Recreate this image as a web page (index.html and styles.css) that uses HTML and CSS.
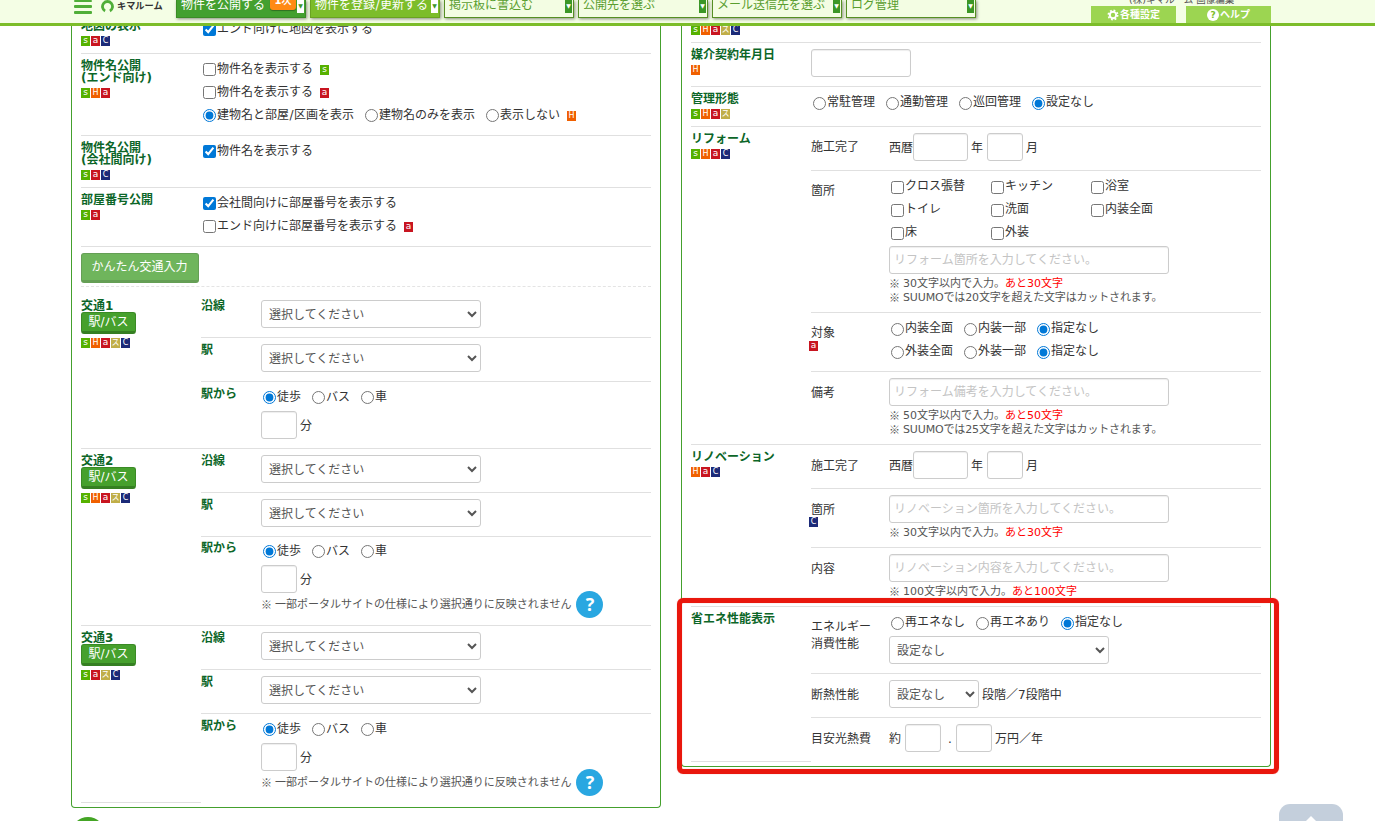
FILE: index.html
```html
<!DOCTYPE html>
<html lang="ja">
<head>
<meta charset="utf-8">
<title>物件登録</title>
<link rel="stylesheet" href="styles.css">
</head>
<body>
<header class="header">
  <div class="header-inner">
    <div class="brand">
      <span class="burger"><i></i><i></i><i></i></span>
      <svg class="brand-mark" width="13" height="13" viewBox="0 0 13 13"><path d="M4.1 10.9A5 5 0 1 1 8.9 10.9" fill="none" stroke="#4fae38" stroke-width="2.8"/></svg>
      <span class="brand-name">キマルーム</span>
    </div>
    <nav class="nav">
      <a class="nav-item nav-dark">物件を公開する<b class="nav-badge">1次</b><span class="nav-caret">▼</span></a>
      <a class="nav-item nav-lime">物件を登録<span class="slash">/</span>更新する<span class="nav-caret">▼</span></a>
      <a class="nav-item">掲示板に書込む<span class="nav-caret">▼</span></a>
      <a class="nav-item">公開先を選ぶ<span class="nav-caret">▼</span></a>
      <a class="nav-item">メール送信先を選ぶ<span class="nav-caret">▼</span></a>
      <a class="nav-item">ログ管理<span class="nav-caret">▼</span></a>
    </nav>
    <div class="account">
      <div class="account-name">(株)キマルーム 画像編集</div>
      <div class="tabs">
        <a class="tab"><svg width="12" height="12" viewBox="0 0 12 12"><circle cx="6" cy="6" r="3.2" fill="none" stroke="#fff" stroke-width="2"/><circle cx="6" cy="6" r="4.7" fill="none" stroke="#fff" stroke-width="1.6" stroke-dasharray="1.85 1.84"/></svg>各種設定</a>
        <a class="tab"><span class="tab-q">?</span>ヘルプ</a>
      </div>
    </div>
  </div>
</header>

<main class="columns">
  <section class="panel panel-left">
    <div class="row h40">
      <div class="head">地図の表示<div class="tags"><i class="s">s</i><i class="a">a</i><i class="c">C</i></div></div>
      <div class="body"><div class="line"><label><input type="checkbox" checked>エンド向けに地図を表示する</label></div></div>
    </div>
    <div class="row h82">
      <div class="head">物件名公開<br>(エンド向け)<div class="tags"><i class="s">s</i><i class="h">H</i><i class="a">a</i></div></div>
      <div class="body">
        <div class="line"><label><input type="checkbox">物件名を表示する</label><div class="tags inline"><i class="s">s</i></div></div>
        <div class="line"><label><input type="checkbox">物件名を表示する</label><div class="tags inline"><i class="a">a</i></div></div>
        <div class="line"><label><input type="radio" name="r1" checked>建物名と部屋<span class="slash">/</span>区画を表示</label><label><input type="radio" name="r1">建物名のみを表示</label><label><input type="radio" name="r1">表示しない</label><div class="tags inline"><i class="h">H</i></div></div>
      </div>
    </div>
    <div class="row h52">
      <div class="head">物件名公開<br>(会社間向け)<div class="tags"><i class="s">s</i><i class="a">a</i><i class="c">C</i></div></div>
      <div class="body"><div class="line"><label><input type="checkbox" checked>物件名を表示する</label></div></div>
    </div>
    <div class="row h59">
      <div class="head">部屋番号公開<div class="tags"><i class="s">s</i><i class="a">a</i></div></div>
      <div class="body">
        <div class="line"><label><input type="checkbox" checked>会社間向けに部屋番号を表示する</label></div>
        <div class="line"><label><input type="checkbox">エンド向けに部屋番号を表示する</label><div class="tags inline"><i class="a">a</i></div></div>
      </div>
    </div>
    <div class="easy-row"><button class="easy">かんたん交通入力</button></div>

    <div class="group">
      <div class="head">交通1<button class="station">駅/バス</button><div class="tags"><i class="s">s</i><i class="h">H</i><i class="a">a</i><i class="z">ス</i><i class="c">C</i></div></div>
      <div class="subs">
        <div class="sub h44"><b>沿線</b><div class="field"><select class="w220"><option>選択してください</option></select></div></div>
        <div class="sub h44"><b>駅</b><div class="field"><select class="w220"><option>選択してください</option></select></div></div>
        <div class="sub h66 last"><b>駅から</b><div class="access"><div class="line"><label><input type="radio" name="a1" checked>徒歩</label><label><input type="radio" name="a1">バス</label><label><input type="radio" name="a1">車</label></div><div class="minutes"><input type="text" class="w36"><span>分</span></div></div></div>
      </div>
    </div>
    <div class="group">
      <div class="head">交通2<button class="station">駅/バス</button><div class="tags"><i class="s">s</i><i class="h">H</i><i class="a">a</i><i class="z">ス</i><i class="c">C</i></div></div>
      <div class="subs">
        <div class="sub h44"><b>沿線</b><div class="field"><select class="w220"><option>選択してください</option></select></div></div>
        <div class="sub h44"><b>駅</b><div class="field"><select class="w220"><option>選択してください</option></select></div></div>
        <div class="sub h88 last"><b>駅から</b><div class="access"><div class="line"><label><input type="radio" name="a2" checked>徒歩</label><label><input type="radio" name="a2">バス</label><label><input type="radio" name="a2">車</label></div><div class="minutes"><input type="text" class="w36"><span>分</span><div class="notice"><i class="km">※</i>一部ポータルサイトの仕様により選択通りに反映されません<span class="help">?</span></div></div></div></div>
      </div>
    </div>
    <div class="group final">
      <div class="head">交通3<button class="station">駅/バス</button><div class="tags"><i class="s">s</i><i class="a">a</i><i class="z">ス</i><i class="c">C</i></div></div>
      <div class="subs">
        <div class="sub h44"><b>沿線</b><div class="field"><select class="w220"><option>選択してください</option></select></div></div>
        <div class="sub h44"><b>駅</b><div class="field"><select class="w220"><option>選択してください</option></select></div></div>
        <div class="sub h89 last"><b>駅から</b><div class="access"><div class="line"><label><input type="radio" name="a3" checked>徒歩</label><label><input type="radio" name="a3">バス</label><label><input type="radio" name="a3">車</label></div><div class="minutes"><input type="text" class="w36"><span>分</span><div class="notice"><i class="km">※</i>一部ポータルサイトの仕様により選択通りに反映されません<span class="help">?</span></div></div></div></div>
      </div>
    </div>
  </section>

  <section class="panel panel-right">
    <div class="row h18"><div class="head flat"><div class="tags"><i class="s">s</i><i class="h">H</i><i class="a">a</i><i class="z">ス</i><i class="c">C</i></div></div></div>
    <div class="row h44">
      <div class="head">媒介契約年月日<div class="tags"><i class="h">H</i></div></div>
      <div class="field"><input type="text" class="w100"></div>
    </div>
    <div class="row h40">
      <div class="head">管理形態<div class="tags"><i class="s">s</i><i class="h">H</i><i class="a">a</i><i class="z">ス</i></div></div>
      <div class="body raised"><div class="line"><label><input type="radio" name="m"><span>常駐管理</span></label><label><input type="radio" name="m"><span>通勤管理</span></label><label><input type="radio" name="m"><span>巡回管理</span></label><label><input type="radio" name="m" checked><span>設定なし</span></label></div></div>
    </div>
    <div class="group">
      <div class="head">リフォーム<div class="tags"><i class="s">s</i><i class="h">H</i><i class="a">a</i><i class="c">C</i></div></div>
      <div class="subs">
        <div class="sub h44"><span class="cap">施工完了</span><div class="field inline-field"><span>西暦</span><input type="text" class="w55"><span class="yr">年</span><input type="text" class="w36"><span class="mo">月</span></div></div>
        <div class="sub h142"><span class="cap">箇所</span><div class="raised">
          <div class="checks">
            <label><input type="checkbox"><span>クロス張替</span></label><label><input type="checkbox"><span>キッチン</span></label><label><input type="checkbox"><span>浴室</span></label>
            <label><input type="checkbox"><span>トイレ</span></label><label><input type="checkbox"><span>洗面</span></label><label><input type="checkbox"><span>内装全面</span></label>
            <label><input type="checkbox"><span>床</span></label><label><input type="checkbox"><span>外装</span></label>
          </div>
          <input type="text" class="w280 gap1" placeholder="リフォーム箇所を入力してください。">
          <div class="notes"><p><i class="km">※</i>30文字以内で入力。<em>あと30文字</em></p><p class="snug"><i class="km">※</i>SUUMOでは20文字を超えた文字はカットされます。</p></div>
        </div></div>
        <div class="sub h59"><span class="cap">対象<span class="tags cap-tag"><i class="a">a</i></span></span><div class="raised">
          <div class="line"><label><input type="radio" name="t1"><span>内装全面</span></label><label><input type="radio" name="t1"><span>内装一部</span></label><label><input type="radio" name="t1" checked><span>指定なし</span></label></div>
          <div class="line"><label><input type="radio" name="t2"><span>外装全面</span></label><label><input type="radio" name="t2"><span>外装一部</span></label><label><input type="radio" name="t2" checked><span>指定なし</span></label></div>
        </div></div>
        <div class="sub h72 last"><span class="cap low">備考</span><div class="field"><input type="text" class="w280" placeholder="リフォーム備考を入力してください。">
          <div class="notes"><p><i class="km">※</i>50文字以内で入力。<em>あと50文字</em></p><p class="snug"><i class="km">※</i>SUUMOでは25文字を超えた文字はカットされます。</p></div></div></div>
      </div>
    </div>
    <div class="group">
      <div class="head">リノベーション<div class="tags"><i class="h">H</i><i class="a">a</i><i class="c">C</i></div></div>
      <div class="subs">
        <div class="sub h44"><span class="cap low">施工完了</span><div class="field inline-field"><span>西暦</span><input type="text" class="w55"><span class="yr">年</span><input type="text" class="w36"><span class="mo">月</span></div></div>
        <div class="sub h59"><span class="cap low">箇所<span class="tags cap-tag"><i class="c">C</i></span></span><div class="field"><input type="text" class="w280" placeholder="リノベーション箇所を入力してください。">
          <div class="notes"><p><i class="km">※</i>30文字以内で入力。<em>あと30文字</em></p></div></div></div>
        <div class="sub h58 last"><span class="cap low">内容</span><div class="field"><input type="text" class="w280" placeholder="リノベーション内容を入力してください。">
          <div class="notes"><p><i class="km">※</i>100文字以内で入力。<em>あと100文字</em></p></div></div></div>
      </div>
    </div>
    <div class="group final">
      <div class="head">省エネ性能表示</div>
      <div class="subs">
        <div class="sub h67"><span class="cap">エネルギー<br>消費性能</span><div class="raised">
          <div class="line"><label><input type="radio" name="e"><span>再エネなし</span></label><label><input type="radio" name="e"><span>再エネあり</span></label><label><input type="radio" name="e" checked><span>指定なし</span></label></div>
          <select class="w220 gap1"><option>設定なし</option></select>
        </div></div>
        <div class="sub h44"><span class="cap low">断熱性能</span><div class="field inline-field"><select class="w90"><option>設定なし</option></select><span class="after">段階／7段階中</span></div></div>
        <div class="sub h44 last"><span class="cap low">目安光熱費</span><div class="field inline-field"><span class="approx">約</span><input type="text" class="w36"><span class="dot">.</span><input type="text" class="w36"><span class="after">万円／年</span></div></div>
      </div>
    </div>
  </section>
</main>
<div class="highlight"></div>
<svg class="round-button" width="34" height="4" viewBox="0 0 34 4"><circle cx="17" cy="17" r="17" fill="#44a525"/></svg>
<a class="to-top"><svg width="64" height="17" viewBox="0 0 64 17"><path d="M18 26L32 12L46 26Z" fill="#fff"/></svg></a>
</body>
</html>
```

FILE: styles.css
```css
* { box-sizing: border-box; }
body {
  margin: 0; height: 821px; overflow: hidden; position: relative;
  background: #fff; color: #333;
  font: 12px/23px "DejaVu Sans", "Noto Sans CJK JP", sans-serif;
}

/* header */
.header {
  position: fixed; top: 0; left: 0; right: 0; z-index: 5; height: 26px;
  background: #f4fee5; border-bottom: 3px solid #7cbd2a; overflow: hidden;
}
.header-inner { width: 1200px; margin-left: 71px; height: 23px; display: flex; }
.brand { width: 105px; display: flex; align-items: flex-start; padding: 0 0 0 3px; }
.burger { display: flex; flex-direction: column; gap: 3px; width: 18px; }
.burger i { height: 3px; background: #4fae38; border-radius: 1px; }
.burger i:first-child { height: 2px; }
.brand-mark { margin: 0 3px 0 9px; }
.brand-name { font-size: 9.2px; font-weight: bold; line-height: 12px; color: #333; }
.nav { display: flex; gap: 4px; height: 18px; }
.nav-item {
  position: relative; width: 130px; height: 18px; padding-left: 4px;
  border: 1px solid #568f23; border-top: 0; line-height: 11px;
  color: #5a9e2f; background: #f3fde3; box-shadow: 1px 1px 3px rgba(0,0,0,.45); white-space: nowrap;
}
.nav-dark { background: #43a02f; color: #fff; border-color: #3b8c26; }
.nav-lime { background: #7cbd2a; color: #fff; border-color: #6aa321; }
.nav-caret {
  position: absolute; right: 1px; top: 0; width: 7px; height: 13px; background: #3b9626; color: #fff;
  font-size: 6px; line-height: 12px; text-align: center;
}
.nav-dark .nav-caret, .nav-lime .nav-caret { background: #fff; color: #3b9626; }
.nav-badge {
  position: absolute; left: 93px; top: -6px; width: 26px; height: 16px; border-radius: 3px; background: #ff8a15;
  font-size: 10px; line-height: 14px; text-align: center; box-shadow: 0 1px 1px rgba(0,0,0,.3);
}
.account { margin-left: auto; width: 180px; height: 23px; }
.account-name { height: 6px; margin-left: 38px; font-size: 9.5px; line-height: 0; color: #555; white-space: nowrap; }
.tabs { display: flex; gap: 10px; }
.tab {
  width: 85px; height: 17px; background: #9cd551; color: #fff; font-weight: bold; font-size: 10px; line-height: 17px;
  display: flex; align-items: center; justify-content: center; gap: 1px;
}
.tab-q { width: 12px; height: 12px; border-radius: 6px; background: #fff; color: #7cbd2a; font-size: 9px; line-height: 12px; text-align: center; }

/* panels */
.columns { display: flex; gap: 20px; align-items: flex-start; padding-left: 71px; }
.panel { width: 590px; border: 1px solid #44a02d; border-top: 0; border-radius: 0 0 4px 4px; padding: 0 9px 4px; }
.panel-left { padding-top: 14px; }
.panel-right { padding-top: 25px; }
.row { display: flex; border-bottom: 1px solid #e0e0e0; }
.group { display: flex; border-bottom: 1px solid #e0e0e0; }
.group.final { border-bottom: 0; }
.final > .head { border-bottom: 1px solid #e0e0e0; }
.h18 { height: 18px; } .h40 { height: 40px; } .h44 { height: 44px; } .h52 { height: 52px; } .h58 { height: 58px; }
.h59 { height: 59px; } .h66 { height: 66px; } .h67 { height: 67px; } .h72 { height: 72px; } .h82 { height: 82px; }
.h88 { height: 88px; } .h89 { height: 89px; } .h142 { height: 142px; }
.head { width: 120px; flex: none; padding-top: 6px; font-weight: bold; line-height: 12px; color: #0c6628; }
.head.flat { padding-top: 0; }
.head.flat .tags { margin-top: 0; }
.body { padding-top: 4px; }
.raised { padding-top: 5px; }
.raised label span { margin-top: -3px; }
.line { display: flex; align-items: center; height: 23px; }
label { display: flex; align-items: center; height: 23px; margin-right: 9px; white-space: nowrap; }
.slash { padding: 0 .5px; }
.inline { position: static; }
input[type="checkbox"], input[type="radio"] { width: 13px; height: 13px; margin: 0 1px 0 2px; accent-color: #0078d7; flex: none; }

/* portal tags */
.tags { display: flex; gap: 1px; margin-top: 4px; }
.tags i {
  display: flex; justify-content: center; width: 9px; height: 10px; color: #fff;
  font: normal 8px/10px "DejaVu Sans", "Noto Sans CJK JP", sans-serif;
}
.tags .s, .tags .a { font-size: 9px; line-height: 9px; }
.tags .s { background: #56b100; } .tags .h { background: #f06000; } .tags .a { background: #c81520; }
.tags .z { background: #c0ae48; line-height: 9px; } .tags .c { background: #1c2a78; }
.tags.inline { margin: 0 0 0 -2px; }

/* nested rows */
.subs { flex: 1; min-width: 0; }
.sub { display: flex; border-bottom: 1px solid #e0e0e0; }
.sub.last { border-bottom: 0; }
.sub > b { width: 60px; flex: none; padding-top: 6px; line-height: 12px; color: #0c6628; }
.cap { width: 78px; flex: none; padding-top: 12px; line-height: 17px; }
.cap.low { padding-top: 13px; }
.cap-tag { margin: -1px 0 0 -2px; }
.low .cap-tag { margin-top: -2px; }
.field { padding-top: 6px; }
.inline-field { display: flex; align-items: center; height: 34px; white-space: nowrap; }
.inline-field span { padding-top: 2px; }
.access { padding-top: 4px; }
.h88 .access { padding-top: 3px; }
.h88 > b { padding-top: 5px; }
.minutes { display: flex; flex-wrap: wrap; align-items: center; column-gap: 3px; margin-top: 2px; }
.minutes > span { padding-top: 2px; }
.notice { display: flex; align-items: center; flex-basis: 100%; height: 22px; font-size: 11px; color: #555; white-space: nowrap; }
.help {
  width: 27px; height: 27px; flex: none; border-radius: 50%; margin: 0 0 0 5px; background: #29a7e1; color: #fff;
  font: bold 18px/27px "Open Sans", sans-serif; text-align: center;
}
.checks { display: grid; grid-template-columns: 100px 100px 100px; grid-auto-rows: 23px; }
.notes { padding-top: 3px; font-size: 11px; color: #555; }
.notes p { display: flex; height: 14px; margin: 0; line-height: 14px; white-space: nowrap; }
.notes .snug { letter-spacing: -.15px; }
.notes em { font-style: normal; color: #f00; }
.km { width: 14px; flex: none; font-style: normal; font-family: "Noto Sans CJK JP", sans-serif; }
.notes .km { margin-top: -1px; }

/* controls */
input[type="text"], select {
  display: block; height: 28px; border: 1px solid #ccc; border-radius: 3px; background: #fff; margin: 0;
  padding: 0 4px; font: 12px "DejaVu Sans", "Noto Sans CJK JP", sans-serif; color: #555;
}
::placeholder { color: #c4c4c4; }
input[type="text"] { box-shadow: inset 0 1px 1px rgba(0,0,0,.07); }
select { padding: 1px 3px 0; }
.w36 { width: 36px; } .w55 { width: 55px; } .w90 { width: 90px; } .w100 { width: 100px; } .w220 { width: 220px; } .w280 { width: 280px; }
.raised .gap1 { margin-top: 1px; }
.yr { margin: 0 4px 0 3px; }
.mo, .after { margin-left: 3px; }
.approx { margin-right: 4px; }
.dot { width: 15px; padding-left: 7px; }
button { display: block; margin: 0; padding: 0; color: #fff; font: 12px "DejaVu Sans", "Noto Sans CJK JP", sans-serif; border-radius: 3px; }
.easy-row { height: 40px; padding-top: 6px; border-bottom: 1px dashed #e4e4e4; margin-bottom: 7px; }
.easy { width: 118px; height: 30px; padding-right: 1px; background: #6fb55c; border: 1px solid #659f55; border-bottom-width: 3px; line-height: 26px; }
.station { width: 55px; height: 22px; background: #46a02d; border: 1px solid #3a8a25; border-bottom: 3px solid #357f22; line-height: 18px; }

/* overlays */
.highlight {
  position: absolute; left: 677px; top: 598px; width: 602px; height: 176px; z-index: 3;
  border: 5px solid #e9170d; border-radius: 6px; box-shadow: 0 0 1px rgba(233,23,13,.5), inset 0 0 1px rgba(233,23,13,.5);
}
.round-button { position: absolute; left: 71px; top: 817px; }
.to-top { position: absolute; left: 1279px; top: 804px; width: 64px; height: 17px; border-radius: 11px 11px 0 0; background: #c4cfdc; line-height: 0; }
```
